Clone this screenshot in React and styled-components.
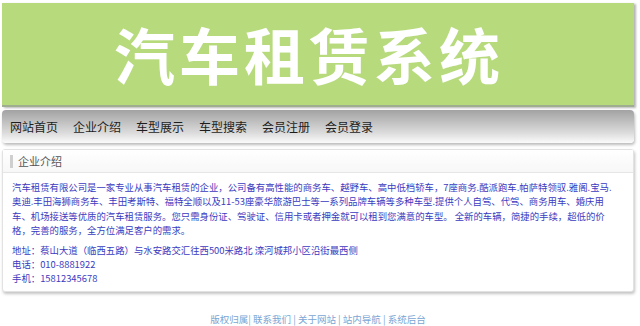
import styled, { createGlobalStyle } from 'styled-components';

const GlobalStyle = createGlobalStyle`
    body {
        margin: 0;
        background: #fff;
        font-family: "Noto Sans CJK SC", "Liberation Sans", sans-serif;
    }
`;

const navItems = ['网站首页', '企业介绍', '车型展示', '车型搜索', '会员注册', '会员登录'];
const footerLinks = ['联系我们', '关于网站', '站内导航', '系统后台'];

// the intro is broken where the original page wraps it
const introLines = [
    '汽车租赁有限公司是一家专业从事汽车租赁的企业，公司备有高性能的商务车、越野车、高中低档轿车，7座商务.酷派跑车.帕萨特领驭.雅阁.宝马.',
    '奥迪.丰田海狮商务车、丰田考斯特、福特全顺以及11-53座豪华旅游巴士等一系列品牌车辆等多种车型.提供个人自驾、代驾、商务用车、婚庆用',
    '车、机场接送等优质的汽车租赁服务。您只需身份证、驾驶证、信用卡或者押金就可以租到您满意的车型。 全新的车辆，简捷的手续，超低的价',
    '格，完善的服务，全方位满足客户的需求。',
];

const contactLines = [
    '地址：蔡山大道（临西五路）与水安路交汇往西500米路北 滦河城邦小区沿街最西侧',
    '电话：010-8881922',
    '手机：15812345678',
];

function App() {
    return (
        <Page>
            <GlobalStyle />
            <Banner>
                <Title>汽车租赁系统</Title>
            </Banner>
            <NavBar>
                {navItems.map((item) => (
                    <NavLink key={item}>{item}</NavLink>
                ))}
            </NavBar>
            <Panel>
                <PanelHead>
                    <Marker />
                    <PanelTitle>企业介绍</PanelTitle>
                </PanelHead>
                <PanelBody>
                    <Para>
                        {introLines.map((line) => (
                            <Line key={line}>{line}</Line>
                        ))}
                    </Para>
                    <Para>
                        {contactLines.map((line) => (
                            <Line key={line}>{line}</Line>
                        ))}
                    </Para>
                </PanelBody>
            </Panel>
            <Footer>
                <FooterLink>版权归属</FooterLink>|
                {footerLinks.map((link, i) => (
                    <span key={link}>
                        {' '}<FooterLink>{link}</FooterLink>{i < footerLinks.length - 1 ? ' |' : ''}
                    </span>
                ))}
            </Footer>
        </Page>
    );
}

const Page = styled.div`
    width: 632px;
    padding: 3px 6px 0 2px;
`;

const Banner = styled.div`
    height: 102px;
    background: #b6da7c;
    border-bottom: 2px solid #9fae8e;
    box-shadow: 2px 1px 2px #b5b5b5;
    display: flex;
    align-items: center;
    justify-content: center;
`;

const Title = styled.h1`
    margin: 0 18px 2px 0;
    font-size: 61px;
    font-weight: 700;
    letter-spacing: 4px;
    color: #fff;
    line-height: 1;
`;

const NavBar = styled.div`
    margin-top: 3px;
    height: 33px;
    border-radius: 4px;
    background: linear-gradient(#a2a2a2, #dcdcdc 70%, #fbfbfb);
    box-shadow: 1px 2px 3px #bbb;
    display: flex;
    align-items: center;
    gap: 15px;
    padding-left: 8px;
`;

const NavLink = styled.a`
    font-size: 12px;
    color: #1d1d1d;
    cursor: pointer;
`;

const Panel = styled.div`
    margin-top: 6px;
    border: 1px solid #e2e2e2;
    border-radius: 3px;
    box-shadow: 1px 2px 3px #c4c4c4;
    background: #fff;
`;

const PanelHead = styled.div`
    height: 22px;
    display: flex;
    align-items: center;
    padding-left: 7px;
    border-bottom: 1px solid #e6e6e6;
    background: linear-gradient(#fff, #f7f7f7);
`;

const Marker = styled.span`
    width: 3px;
    height: 13px;
    background: #cfcfcf;
`;

const PanelTitle = styled.span`
    margin-left: 5px;
    font-size: 11px;
    color: #555;
`;

const PanelBody = styled.div`
    padding: 7px 4px 5px 9px;
    color: #3b3bbf;
    font-size: 9.4px;
    line-height: 14.4px;
`;

const Para = styled.div`
    margin: 0 0 5px;

    &:last-child {
        margin-bottom: 0;
    }
`;

const Line = styled.div`
    white-space: nowrap;
`;

const Footer = styled.div`
    margin-top: 21px;
    text-align: center;
    font-size: 9.5px;
    line-height: 13px;
    color: #7aa6d4;
`;

const FooterLink = styled.a`
    color: #7aa6d4;
    cursor: pointer;
`;

export default App;
